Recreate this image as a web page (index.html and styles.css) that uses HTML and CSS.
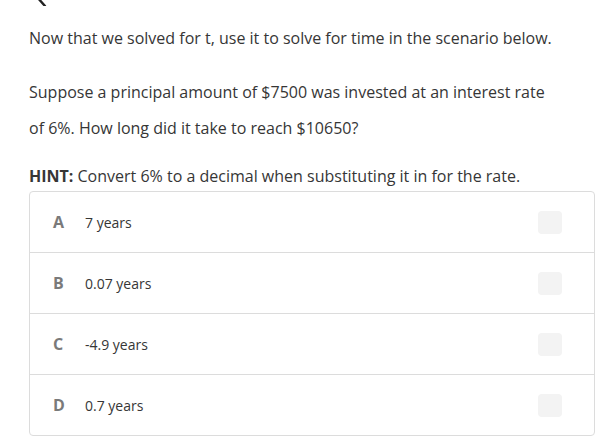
FILE: index.html
```html
<!DOCTYPE html>
<html>
<head>
<meta charset="utf-8">
<link rel="stylesheet" href="styles.css">
</head>
<body>
<div class="page">
  <div class="back">
    <svg width="14" height="20" viewBox="0 0 14 20"><path d="M11 1 L3 10 L11 19" fill="none" stroke="#222" stroke-width="2.4" stroke-linecap="round" stroke-linejoin="round"/></svg>
  </div>
  <p class="intro">Now that we solved for t, use it to solve for time in the scenario below.</p>
  <p class="question">Suppose a principal amount of $7500 was invested at an interest rate of 6%. How long did it take to reach $10650?</p>
  <p class="hint"><b>HINT:</b> Convert 6% to a decimal when substituting it in for the rate.</p>
  <div class="choices">
    <div class="choice"><span class="letter">A</span><span class="text">7 years</span><span class="box"></span></div>
    <div class="choice"><span class="letter">B</span><span class="text">0.07 years</span><span class="box"></span></div>
    <div class="choice"><span class="letter">C</span><span class="text">-4.9 years</span><span class="box"></span></div>
    <div class="choice"><span class="letter">D</span><span class="text">0.7 years</span><span class="box"></span></div>
  </div>
</div>
</body>
</html>
```
FILE: styles.css
```css
html, body {
  margin: 0;
  padding: 0;
  background: #fff;
}
body {
  font-family: "Open Sans", "Liberation Sans", sans-serif;
  color: #363636;
  overflow: hidden;
}
.page {
  width: 566px;
  padding-left: 29px;
}
.back {
  height: 6px;
  overflow: hidden;
  padding-left: 5px;
  display: flex;
  align-items: flex-end;
}
.back svg {
  flex: none;
  margin-bottom: -1px;
}
p {
  margin: 0;
  font-size: 16px;
  line-height: 36px;
}
.intro {
  margin-top: 14px;
}
.question {
  margin-top: 18px;
  width: 530px;
}
.hint {
  margin-top: 12px;
}
.hint b {
  font-weight: 700;
}
.choices {
  margin-top: -3px;
  border: 1px solid #dcdcdc;
  border-radius: 4px;
}
.choice {
  display: flex;
  align-items: center;
  height: 60px;
  border-top: 1px solid #dcdcdc;
  font-size: 14px;
}
.choice:first-child {
  border-top: none;
}
.letter {
  width: 55px;
  padding-left: 23px;
  box-sizing: border-box;
  font-weight: 700;
  color: #7a7a7a;
  font-size: 16px;
  line-height: 20px;
}
.text {
  flex: 1;
  color: #363636;
}
.box {
  width: 24px;
  height: 23px;
  border-radius: 4px;
  background: #f3f3f3;
  margin-right: 32px;
}
```
